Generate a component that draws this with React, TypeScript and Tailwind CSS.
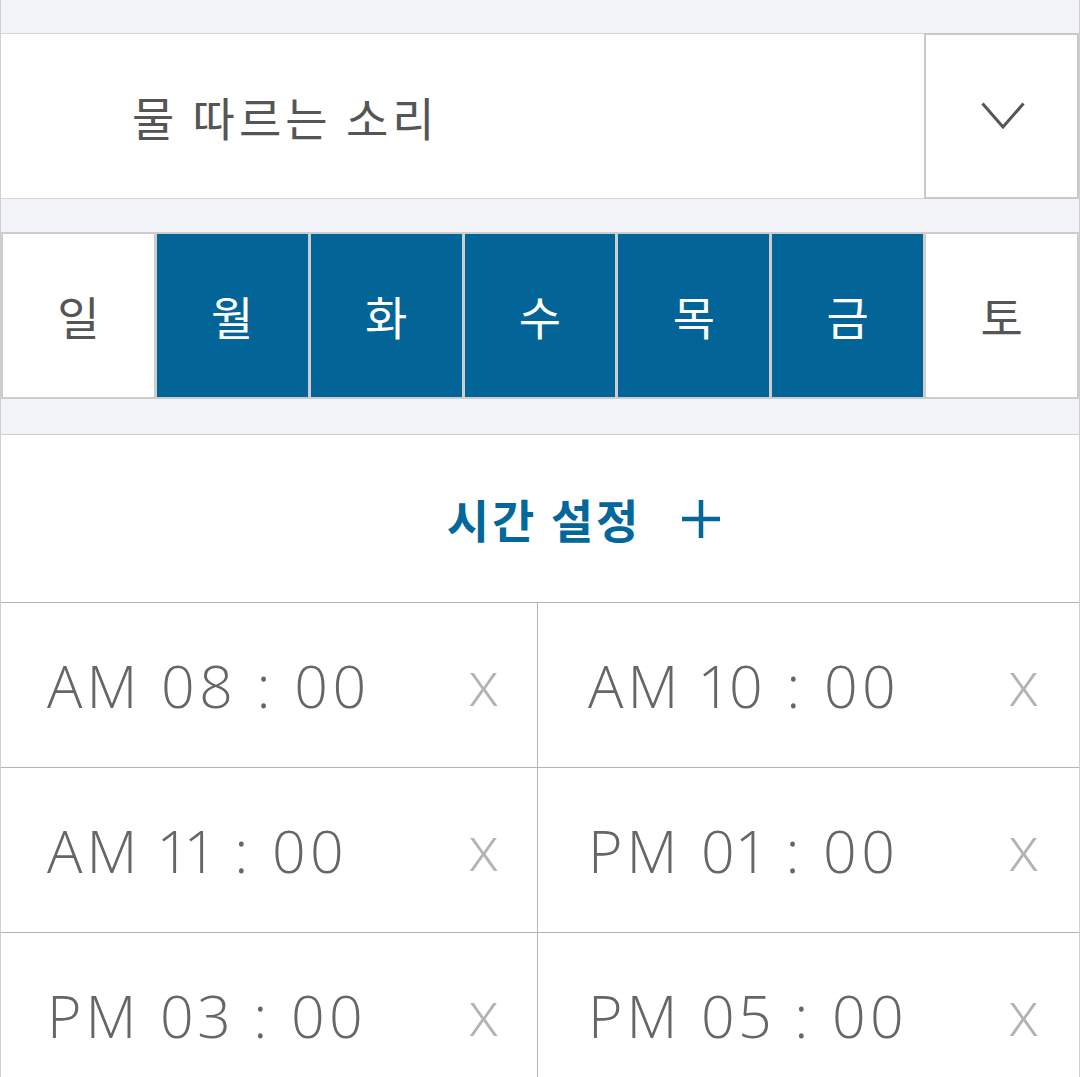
const days = [
  { label: "일", on: false },
  { label: "월", on: true },
  { label: "화", on: true },
  { label: "수", on: true },
  { label: "목", on: true },
  { label: "금", on: true },
  { label: "토", on: false },
];

const times = [
  "AM 08 : 00",
  "AM 10 : 00",
  "AM 11 : 00",
  "PM 01 : 00",
  "PM 03 : 00",
  "PM 05 : 00",
];

export default function App() {
  return (
    <div className="min-h-screen w-[1080px] bg-[#f1f3f8] border-x border-[#cfcfcf] font-['Noto_Sans_CJK_KR','Noto_Sans',sans-serif] overflow-hidden">
      <div className="h-[33px]" />

      {/* sound select */}
      <div className="flex h-[166px] bg-white border-y border-[#d6d6d6]">
        <div className="flex-1 flex items-center pl-[131px] text-[46px] text-[#555555] tracking-[4px]">
          물 따르는 소리
        </div>
        <button className="w-[155px] -my-px border-2 border-[#c9c9c9] bg-white flex items-center justify-center">
          <svg width="44" height="28" viewBox="0 0 44 28" className="ml-[3px]">
            <path d="M1.5 1.5 L22 25 L42.5 1.5" fill="none" stroke="#555555" strokeWidth="3" />
          </svg>
        </button>
      </div>

      <div className="h-[33px]" />

      {/* week days */}
      <div className="grid grid-cols-7 gap-[3px] p-[2px] h-[167px] bg-[#cdcdcd]">
        {days.map((d) => (
          <div
            key={d.label}
            className={
              d.on
                ? "flex items-center justify-center bg-[#036597] text-white text-[46px]"
                : "flex items-center justify-center bg-white text-[#555555] text-[46px]"
            }
          >
            {d.label}
          </div>
        ))}
      </div>

      <div className="h-[36px] border-b border-[#cfcfcf]" />

      {/* add time */}
      <div className="h-[168px] bg-white border-b border-[#b4b4b4] flex items-center justify-center pl-[8px]">
        <div className="relative text-[46px] font-bold text-[#03679b] tracking-[3px]">
          시간 설정
          <svg width="40" height="40" viewBox="0 0 40 40" className="absolute left-[calc(100%+40px)] top-1/2 -translate-y-1/2">
            <path d="M20 1 V39 M1 20 H39" stroke="#03679b" strokeWidth="4.5" />
          </svg>
        </div>
      </div>

      {/* times */}
      <div className="grid grid-cols-[537px_1fr] bg-white font-['Open_Sans',sans-serif]">
        {times.map((t, i) => (
          <div
            key={t}
            className={
              i % 2 === 0
                ? "h-[165px] flex items-center justify-between pl-[46px] pr-[38px] border-b border-r border-[#b4b4b4]"
                : "h-[165px] flex items-center justify-between pl-[50px] pr-[40px] border-b border-[#b4b4b4]"
            }
          >
            <span className="text-[59px] font-light text-[#666666] leading-none tracking-[4px] proportional-nums">{t}</span>
            <span className="text-[62px] font-light text-[#b3b3b3] leading-none -mt-[6px]">x</span>
          </div>
        ))}
      </div>
    </div>
  );
}
